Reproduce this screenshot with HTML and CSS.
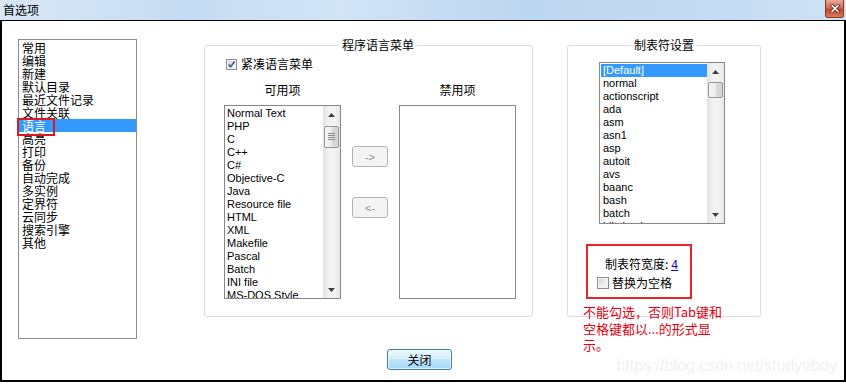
FILE: index.html
```html
<!DOCTYPE html>
<html lang="zh-CN">
<head>
    <meta charset="UTF-8">
    <title>首选项</title>
    <link rel="stylesheet" href="styles.css">
</head>
<body>
<div class="window">
    <div class="titlebar">
        <span class="title">首选项</span>
        <span class="close-btn">
            <svg width="10" height="9" viewBox="0 0 10 9">
                <path d="M2 1.5 L8 7.5 M8 1.5 L2 7.5" stroke="#6b2418" stroke-width="3.2" stroke-linecap="square"/>
                <path d="M2 1.5 L8 7.5 M8 1.5 L2 7.5" stroke="#fff" stroke-width="1.6" stroke-linecap="square"/>
            </svg>
        </span>
    </div>
    <div class="client">
        <div class="main-row">
            <ul class="nav-list">
                <li>常用</li>
                <li>编辑</li>
                <li>新建</li>
                <li>默认目录</li>
                <li>最近文件记录</li>
                <li>文件关联</li>
                <li class="selected"><span class="mark"></span>语言</li>
                <li>高亮</li>
                <li>打印</li>
                <li>备份</li>
                <li>自动完成</li>
                <li>多实例</li>
                <li>定界符</li>
                <li>云同步</li>
                <li>搜索引擎</li>
                <li>其他</li>
            </ul>

            <fieldset class="group lang-group">
                <legend>程序语言菜单</legend>
                <label class="check-row compact">
                    <span class="checkbox">
                        <svg width="9" height="9" viewBox="0 0 9 9"><path d="M1.5 4.5 L3.6 6.8 L7.6 1.6" fill="none" stroke="#3f5b8f" stroke-width="1.7"/></svg>
                    </span>
                    紧凑语言菜单
                </label>
                <div class="lang-cols">
                    <div class="lang-col">
                        <div class="col-title">可用项</div>
                        <div class="listbox lang-list">
                            <ul class="items">
                                <li>Normal Text</li>
                                <li>PHP</li>
                                <li>C</li>
                                <li>C++</li>
                                <li>C#</li>
                                <li>Objective-C</li>
                                <li>Java</li>
                                <li>Resource file</li>
                                <li>HTML</li>
                                <li>XML</li>
                                <li>Makefile</li>
                                <li>Pascal</li>
                                <li>Batch</li>
                                <li>INI file</li>
                                <li>MS-DOS Style</li>
                            </ul>
                            <div class="scrollbar">
                                <span class="arrow"><svg width="7" height="4"><path d="M0 4 L3.5 0 L7 4Z" fill="#3d3d3d"/></svg></span>
                                <span class="track"><span class="thumb grip"></span></span>
                                <span class="arrow"><svg width="7" height="4"><path d="M0 0 L3.5 4 L7 0Z" fill="#3d3d3d"/></svg></span>
                            </div>
                        </div>
                    </div>
                    <div class="move-btns">
                        <button disabled>-&gt;</button>
                        <button disabled>&lt;-</button>
                    </div>
                    <div class="lang-col">
                        <div class="col-title">禁用项</div>
                        <div class="listbox lang-list"></div>
                    </div>
                </div>
            </fieldset>

            <fieldset class="group tab-group">
                <legend>制表符设置</legend>
                <div class="listbox tab-list">
                    <ul class="items">
                        <li class="selected">[Default]</li>
                        <li>normal</li>
                        <li>actionscript</li>
                        <li>ada</li>
                        <li>asm</li>
                        <li>asn1</li>
                        <li>asp</li>
                        <li>autoit</li>
                        <li>avs</li>
                        <li>baanc</li>
                        <li>bash</li>
                        <li>batch</li>
                        <li>blitzbasic</li>
                    </ul>
                    <div class="scrollbar">
                        <span class="arrow"><svg width="7" height="4"><path d="M0 4 L3.5 0 L7 4Z" fill="#3d3d3d"/></svg></span>
                        <span class="track"><span class="thumb small"></span></span>
                        <span class="arrow"><svg width="7" height="4"><path d="M0 0 L3.5 4 L7 0Z" fill="#3d3d3d"/></svg></span>
                    </div>
                </div>
                <div class="tab-opts">
                    <div class="tab-size">制表符宽度: <a class="tab-value">4</a></div>
                    <label class="check-row replace">
                        <span class="checkbox"></span>
                        替换为空格
                    </label>
                </div>
                <p class="note">不能勾选，否则Tab键和<br>空格键都以...的形式显<br>示。</p>
            </fieldset>
        </div>
        <div class="footer">
            <button class="btn-close">关闭</button>
        </div>
        <div class="watermark">https://blog.csdn.net/studyeboy</div>
    </div>
</div>
</body>
</html>
```

FILE: styles.css
```css
* {
    box-sizing: border-box;
}
body {
    margin: 0;
    background: #fff;
    color: #000;
    font-family: "Noto Sans CJK SC", "Liberation Sans", sans-serif;
    font-size: 12px;
}
.window {
    width: 846px;
    height: 384px;
    background: #fff;
}

/* title bar */
.titlebar {
    height: 20px;
    display: flex;
    align-items: flex-start;
    justify-content: space-between;
    background: linear-gradient(to right, #d9e7f6 0%, #c6dcf2 22%, #d2e4f6 40%, #bdd6ef 62%, #c4dbf2 82%, #cfe2f5 100%);
}
.title {
    padding-left: 3px;
    line-height: 20px;
}
.close-btn {
    width: 19px;
    height: 18px;
    margin-right: 2px;
    display: flex;
    align-items: center;
    justify-content: center;
    border: 1px solid #8b3b2b;
    border-top: none;
    border-radius: 0 0 3px 3px;
    background: linear-gradient(#eaa796, #d56c53 45%, #c2462e 55%, #d77a5c);
}

/* client area */
.client {
    position: relative;
    height: 362px;
    border: 2px solid #000;
    border-top-width: 1px;
}
.main-row {
    display: flex;
    align-items: flex-start;
    padding: 17px 0 0 16px;
}

/* left navigation */
.nav-list {
    list-style: none;
    margin: 1px 0 0 0;
    padding: 1px 0 0 0;
    width: 119px;
    height: 300px;
    border: 1px solid #8a8c92;
}
.nav-list li {
    height: 13px;
    line-height: 13px;
    padding-left: 3px;
    white-space: nowrap;
}
.nav-list li.selected {
    position: relative;
    background: #3399ff;
    color: #fff;
}
.mark {
    position: absolute;
    left: -2px;
    top: -1px;
    width: 38px;
    height: 18px;
    border: 2px solid #e0181e;
}

/* group boxes */
.group {
    margin: 0;
    min-width: 0;
    height: 279px;
    border: 1px solid #d5dfe5;
    border-radius: 3px;
}
.group legend {
    margin: 0 auto;
    padding: 0 3px;
    line-height: 14px;
}
.lang-group {
    margin-left: 67px;
    width: 329px;
    padding: 5px 0 0 19px;
}
.tab-group {
    margin-left: 34px;
    width: 194px;
    padding: 10px 0 0 0;
    display: flex;
    flex-direction: column;
    align-items: flex-start;
}
.tab-group > * {
    flex-shrink: 0;
}

.check-row {
    display: flex;
    align-items: center;
    height: 14px;
    line-height: 14px;
    white-space: nowrap;
}
.check-row.compact {
    margin-left: 2px;
    gap: 4px;
}
.checkbox {
    width: 11px;
    height: 11px;
    display: flex;
    align-items: center;
    justify-content: center;
    border: 1px solid #8e8f8f;
    background: linear-gradient(135deg, #cdd0d4, #eeeeee 60%, #f8f8f8);
    box-shadow: inset 0 0 0 1px #f6f6f6;
}

.lang-cols {
    display: flex;
    gap: 11px;
}
.lang-col {
    display: flex;
    flex-direction: column;
}
.col-title {
    height: 14px;
    line-height: 14px;
    margin: 12px 0 8px;
    text-align: center;
}
.move-btns {
    display: flex;
    flex-direction: column;
    gap: 30px;
    padding-top: 75px;
}
.move-btns button {
    width: 36px;
    height: 21px;
    padding: 0;
    border: 1px solid #b0b4b7;
    border-radius: 3px;
    background: #f4f4f4;
    color: #8d8d8d;
    font-family: "Liberation Sans", sans-serif;
    font-size: 11px;
}

/* list boxes */
.listbox {
    display: flex;
    border: 1px solid #828790;
    background: #fff;
    overflow: hidden;
}
.lang-list {
    width: 117px;
    height: 194px;
}
.tab-list {
    margin-left: 31px;
    width: 126px;
    height: 162px;
}
.items {
    flex: 1;
    list-style: none;
    margin: 0;
    padding: 1px 0 0 0;
    overflow: hidden;
    font-family: "Liberation Sans", sans-serif;
    font-size: 11px;
}
.items li {
    height: 13px;
    line-height: 13px;
    padding-left: 2px;
    white-space: nowrap;
}
.tab-list .items {
    padding: 1px 0 0 1px;
}
.items li.selected {
    background: #3399ff;
    color: #fff;
}

.scrollbar {
    width: 17px;
    display: flex;
    flex-direction: column;
    background: linear-gradient(to right, #e3e3e3, #f2f2f2 35%, #f2f2f2 70%, #e8e8e8);
}
.arrow {
    height: 17px;
    display: flex;
    align-items: center;
    justify-content: center;
}
.track {
    flex: 1;
}
.thumb {
    position: relative;
    display: block;
    margin: 3px 1px 0 1px;
    height: 22px;
    border: 1px solid #979797;
    border-radius: 2px;
    background: linear-gradient(to right, #f6f6f6, #ececec 50%, #dcdcdc 51%, #d3d3d3);
}
.thumb.small {
    margin-top: 2px;
    height: 16px;
}
.thumb.grip::after {
    content: "";
    position: absolute;
    left: 3px;
    right: 3px;
    top: 6px;
    height: 7px;
    background: repeating-linear-gradient(to bottom, #8b8b8b 0 1px, transparent 1px 2px);
}

/* tab settings */
.tab-opts {
    margin: 20px 0 0 18px;
    width: 106px;
    height: 55px;
    padding-top: 11px;
    border: 2px solid #e2262a;
}
.tab-size {
    height: 14px;
    line-height: 14px;
    padding-left: 17px;
    white-space: nowrap;
}
.tab-value {
    color: #0000cc;
    text-decoration: underline;
    font-family: "Liberation Mono", monospace;
}
.check-row.replace {
    margin: 5px 0 0 9px;
    gap: 3px;
}
.check-row.replace .checkbox {
    width: 12px;
    height: 12px;
}
.note {
    margin: 5px 0 0 15px;
    color: #e60012;
    font-size: 13px;
    line-height: 16.5px;
    white-space: nowrap;
}

/* footer */
.footer {
    display: flex;
    margin-top: 10px;
    padding-left: 385px;
}
.btn-close {
    width: 65px;
    height: 21px;
    padding: 0;
    border: 1px solid #3c7fb1;
    border-radius: 3px;
    background: linear-gradient(to bottom, #eaf6fd 0%, #d9f0fc 45%, #bee6fd 50%, #a7d9f5 100%);
    box-shadow: inset 0 0 0 1px rgba(255,255,255,0.6);
    font-family: "Noto Sans CJK SC", sans-serif;
    font-size: 12px;
    color: #000;
}
.watermark {
    position: absolute;
    right: 7px;
    bottom: 5px;
    font-family: "Liberation Sans", sans-serif;
    font-size: 16px;
    line-height: 18px;
    color: #f1f1f1;
}
```
